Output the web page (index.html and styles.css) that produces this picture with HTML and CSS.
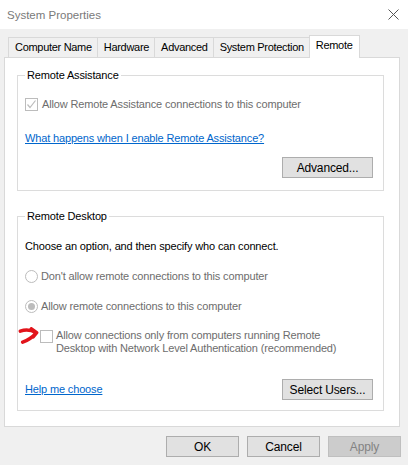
FILE: index.html
```html
<!DOCTYPE html>
<html>
<head>
<meta charset="utf-8">
<link rel="stylesheet" href="styles.css">
</head>
<body>
<div class="window">
  <div class="titlebar">
    <span class="title">System Properties</span>
    <svg class="close" width="11" height="11" viewBox="0 0 11 11"><path d="M0.5 0.5L10.5 10.5M10.5 0.5L0.5 10.5" stroke="#555" stroke-width="1" fill="none"/></svg>
  </div>
  <div class="tabs">
    <div class="tab">Computer Name</div>
    <div class="tab">Hardware</div>
    <div class="tab">Advanced</div>
    <div class="tab">System Protection</div>
    <div class="tab selected">Remote</div>
  </div>
  <div class="panel">
    <fieldset class="group group-ra">
      <legend>Remote Assistance</legend>
      <div class="row check-row disabled">
        <span class="checkbox checked"><svg width="11" height="11" viewBox="0 0 11 11"><path d="M1.5 5.5L4 8.5L9.5 1.5" stroke="#bcbcbc" stroke-width="1.2" fill="none"/></svg></span>
        <span>Allow Remote Assistance connections to this computer</span>
      </div>
      <a class="link link-ra">What happens when I enable Remote Assistance?</a>
      <div class="btn-row btn-row-ra">
        <button class="btn wide">Advanced...</button>
      </div>
    </fieldset>
    <fieldset class="group group-rd">
      <legend>Remote Desktop</legend>
      <div class="intro">Choose an option, and then specify who can connect.</div>
      <div class="row radio-row disabled r1">
        <span class="radio"></span>
        <span>Don't allow remote connections to this computer</span>
      </div>
      <div class="row radio-row disabled r2">
        <span class="radio on"></span>
        <span>Allow remote connections to this computer</span>
      </div>
      <div class="row nla-row disabled">
        <svg class="arrow" width="21" height="17" viewBox="0 0 18 14.5"><path d="M2 3.5C6.5 2 11 2.3 15.5 4.8M11.5 1.5L16 4.8L13 8.5M15.3 5.5C12 9 8 11.5 4 13" stroke="#e2141b" stroke-width="3" stroke-linecap="round" stroke-linejoin="round" fill="none"/></svg>
        <span class="checkbox"></span>
        <span class="nla-text">Allow connections only from computers running Remote<br>Desktop with Network Level Authentication (recommended)</span>
      </div>
      <div class="btn-row btn-row-rd">
        <a class="link">Help me choose</a>
        <button class="btn wide">Select Users...</button>
      </div>
    </fieldset>
  </div>
  <div class="footer">
    <button class="btn">OK</button>
    <button class="btn">Cancel</button>
    <button class="btn off">Apply</button>
  </div>
</div>
</body>
</html>
```
FILE: styles.css
```css
html, body {
  margin: 0;
  padding: 0;
}
body {
  background: #f0f0f0;
  font-family: "Liberation Sans", Arial, sans-serif;
  font-size: 11px;
  letter-spacing: -0.15px;
  color: #000;
}
.window {
  width: 408px;
  height: 465px;
  display: flex;
  flex-direction: column;
}
.titlebar {
  height: 29px;
  background: #fff;
  display: flex;
  align-items: center;
  justify-content: space-between;
  padding: 0 9px 0 7px;
  flex: none;
}
.title {
  font-size: 11.5px;
  letter-spacing: 0;
  color: #7a7a7a;
}
.tabs {
  display: flex;
  align-items: flex-end;
  margin-top: 6px;
  padding-left: 8px;
  height: 22px;
  position: relative;
  z-index: 1;
}
.tab {
  height: 19px;
  line-height: 19px;
  padding: 0 5px 0 6px;
  letter-spacing: -0.3px;
  border: 1px solid #d9d9d9;
  border-bottom: none;
  border-right: none;
  background: #f0f0f0;
}
.tab.selected {
  height: 22px;
  line-height: 18px;
  background: #fff;
  border-right: 1px solid #d9d9d9;
  margin-bottom: -1px;
  padding: 0 6px 0 6px;
}
.panel {
  margin: 0 8px 0 4px;
  height: 368px;
  border: 1px solid #d9d9d9;
  background: #fff;
  padding: 0 15px 0 12px;
  flex: none;
}
.group {
  margin: 0;
  border: 1px solid #dcdcdc;
  padding: 0 10px 0 7px;
  min-width: 0;
}
.group legend {
  padding: 0 2px;
  line-height: 15px;
}
.group-ra {
  margin-top: 10px;
  padding-bottom: 12px;
}
.group-rd {
  margin-top: 18px;
  padding-bottom: 10px;
}
.row {
  display: flex;
  align-items: center;
  line-height: 15px;
  position: relative;
}
.disabled {
  color: #6d6d6d;
}
.check-row {
  margin-top: 14px;
  gap: 4px;
}
.checkbox {
  width: 11px;
  height: 11px;
  border: 1px solid #bcbcbc;
  background: #fff;
  display: inline-flex;
  flex: none;
}
.link {
  display: block;
  color: #0066cc;
  text-decoration: underline;
  line-height: 15px;
}
.link-ra {
  margin-top: 19px;
}
.btn-row {
  display: flex;
  align-items: center;
  justify-content: flex-end;
}
.btn-row-ra {
  margin-top: 11px;
}
.btn-row-rd {
  margin-top: 24px;
  justify-content: space-between;
}
.btn {
  font-family: inherit;
  font-size: 12px;
  letter-spacing: -0.15px;
  color: #000;
  background: #e1e1e1;
  border: 1px solid #adadad;
  width: 73px;
  height: 21px;
  padding: 0;
  margin: 0;
}
.btn.wide {
  width: 91px;
}
.btn.off {
  background: #cccccc;
  border-color: #bfbfbf;
  color: #838383;
}
.intro {
  margin-top: 15px;
  line-height: 15px;
}
.radio-row {
  gap: 3px;
}
.r1 {
  margin-top: 15px;
}
.r2 {
  margin-top: 15px;
}
.radio {
  width: 11px;
  height: 11px;
  border: 1px solid #bcbcbc;
  border-radius: 50%;
  background: #fff;
  flex: none;
  display: inline-flex;
  align-items: center;
  justify-content: center;
}
.radio.on::after {
  content: "";
  width: 7px;
  height: 7px;
  border-radius: 50%;
  background: #bcbcbc;
}
.nla-row {
  margin-top: 15px;
  padding-left: 15px;
  align-items: flex-start;
  gap: 3px;
}
.nla-row .checkbox {
  margin-top: 1px;
}
.nla-text {
  line-height: 13px;
}
.arrow {
  position: absolute;
  left: -7px;
  top: -2px;
}
.footer {
  display: flex;
  justify-content: flex-end;
  gap: 8px;
  padding-right: 7px;
  margin-top: 9px;
}
```
